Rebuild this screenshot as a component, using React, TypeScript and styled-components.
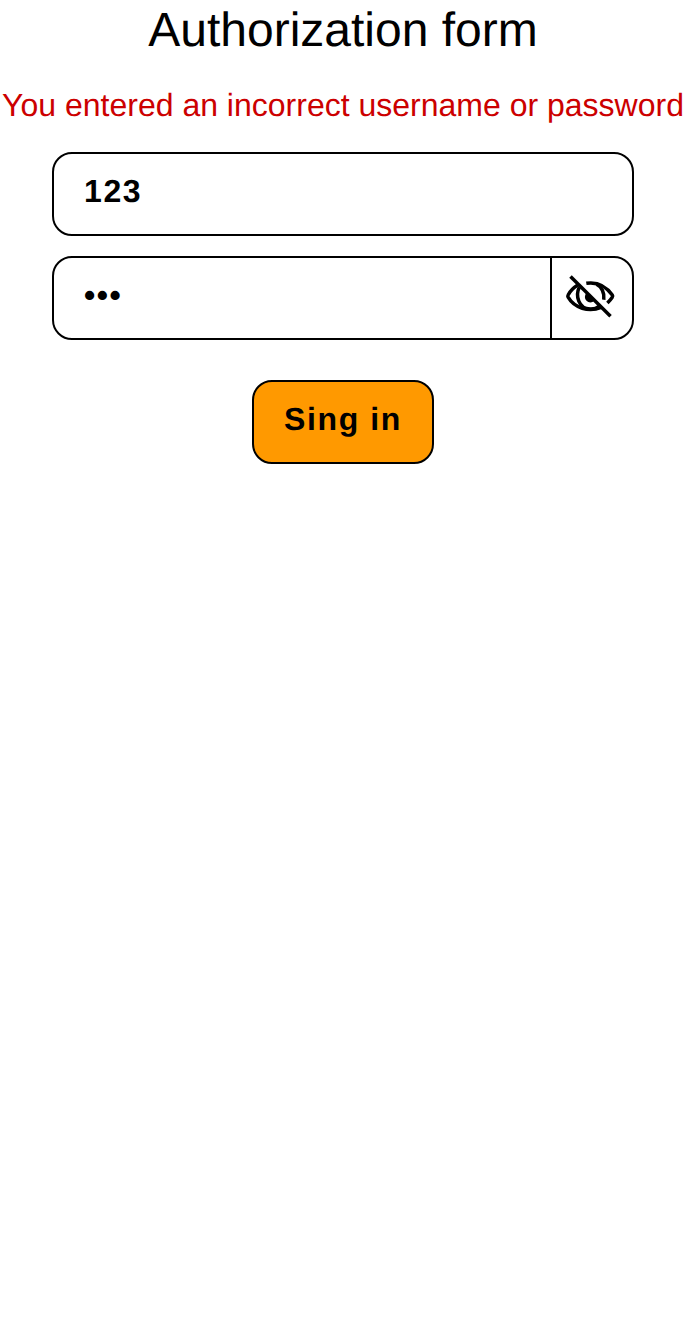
import React, { useState } from "react";
import styled, { createGlobalStyle } from "styled-components";

const GlobalStyle = createGlobalStyle`
  * { box-sizing: border-box; }
  body {
    margin: 0;
    background: #fff;
    color: #000;
    font-family: "Liberation Sans", Arial, sans-serif;
    text-rendering: geometricPrecision;
  }
`;

const Form = styled.form`
  display: flex;
  flex-direction: column;
  align-items: center;
  padding-top: 3px;
`;

const Title = styled.h1`
  margin: 0;
  font-size: 48px;
  font-weight: 400;
  line-height: 56px;
`;

const ErrorText = styled.p`
  margin: 27px 0 0;
  color: #cc0000;
  font-size: 32px;
  line-height: 38px;
  white-space: nowrap;
`;

const Fields = styled.div`
  display: flex;
  flex-direction: column;
  gap: 20px;
  width: 582px;
  margin: 28px 0 40px;
`;

const Field = styled.div`
  display: flex;
  height: 84px;
  border: 2px solid #000;
  border-radius: 20px;
  overflow: hidden;
`;

const Input = styled.input`
  flex: 1;
  min-width: 0;
  padding: 18px 30px 24px;
  border: 0;
  outline: 0;
  background: transparent;
  color: #000;
  font: bold 32px/38px "Liberation Sans", Arial, sans-serif;
  letter-spacing: 1.6px;
  text-rendering: geometricPrecision;
`;

const Toggle = styled.button`
  display: flex;
  align-items: center;
  justify-content: center;
  width: 82px;
  padding: 0;
  border: 0;
  border-left: 2px solid #000;
  background: transparent;
  color: #000;
`;

const Submit = styled.button`
  height: 84px;
  padding: 18px 30px 24px;
  border: 2px solid #000;
  border-radius: 20px;
  background: #ff9900;
  color: #000;
  font: bold 32px/38px "Liberation Sans", Arial, sans-serif;
  letter-spacing: 1.6px;
  text-rendering: geometricPrecision;
`;

const HiddenEye = () => (
  <svg
    width="60"
    height="60"
    viewBox="0 0 60 60"
    fill="none"
    stroke="currentColor"
    strokeWidth="3.5"
    strokeLinejoin="round"
  >
    <path d="M24.300 15.300C34 13.800 43.500 17.500 50.300 27.100Q51.100 28.200 50.300 29.200Q48.400 32 45.400 34.900" />
    <path d="M15.800 17C11 20 8 23.300 6.100 27Q5.500 28.100 6.100 29.200C12.200 39.800 26.500 44.600 39.200 39.400" />
    <path d="M17.300 19.300C13.200 27.500 16.500 40.700 28 41C31.500 41.300 34.500 40.500 37 38.300" />
    <path d="M34.500 16.200C39.300 18.500 42.800 24.500 41.800 31.800" />
    <path d="M24.500 25L32.300 32.800A5 5 0 1 1 24.500 25Z" fill="currentColor" stroke="none" />
    <path d="M8.500 8.500L48.500 48.300" />
  </svg>
);

export default function App() {
  const [visible, setVisible] = useState(false);
  return (
    <>
      <GlobalStyle />
      <Form onSubmit={(e) => e.preventDefault()}>
        <Title>Authorization form</Title>
        <ErrorText>You entered an incorrect username or password</ErrorText>
        <Fields>
          <Field>
            <Input type="text" defaultValue="123" />
          </Field>
          <Field>
            <Input type={visible ? "text" : "password"} defaultValue="123" />
            <Toggle type="button" onClick={() => setVisible(!visible)}>
              <HiddenEye />
            </Toggle>
          </Field>
        </Fields>
        <Submit type="submit">Sing in</Submit>
      </Form>
    </>
  );
}
